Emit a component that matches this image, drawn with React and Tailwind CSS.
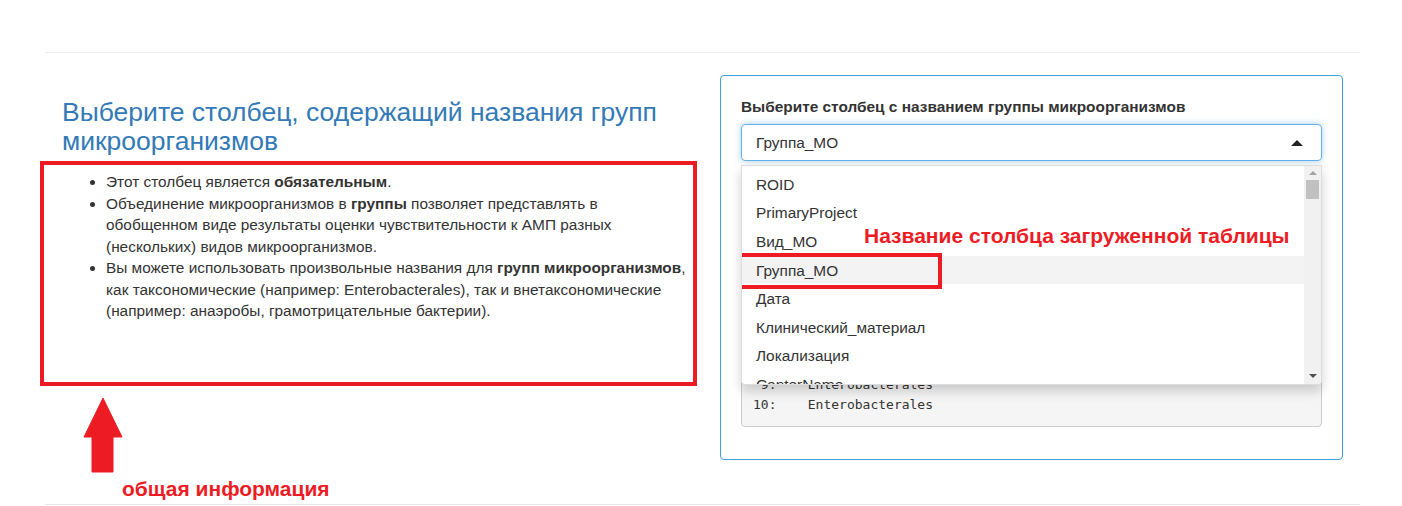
import React from 'react';

const options = [
  'ROID',
  'PrimaryProject',
  'Вид_МО',
  'Группа_МО',
  'Дата',
  'Клинический_материал',
  'Локализация',
  'CenterName',
  'Отделение',
];

const preLines = [
  ' 1:    Enterobacterales',
  ' 2:    Enterobacterales',
  ' 3:    Enterobacterales',
  ' 4:    Enterobacterales',
  ' 5:    Enterobacterales',
  ' 6:    Enterobacterales',
  ' 7:    Enterobacterales',
  ' 8:    Enterobacterales',
  ' 9:    Enterobacterales',
  '10:    Enterobacterales',
];

function UpArrow() {
  return (
    <svg width="40" height="75" viewBox="0 0 40 75" className="block">
      <path d="M20 0 L39 39 L30 39 L30 74 L9 74 L9 39 L1 39 Z" fill="#ed1c24" stroke="#ed1c24" strokeWidth="1" strokeLinejoin="round" />
    </svg>
  );
}

export default function App() {
  return (
    <div className="w-[1402px] h-[506px] bg-white overflow-hidden text-[#333] font-['Liberation_Sans',Arial,sans-serif]">
      <div className="ml-[45px] mr-[42px] mt-[52px] border-t border-[#eee]">
        <div className="flex pl-[17px] pr-[14px] pt-[22px] gap-[22px]">
          {/* left column: description */}
          <div className="w-[636px] flex-none">
            <h3 className="mt-[23px] text-[26.5px] leading-[29px] text-[#337ab7]">
              Выберите столбец, содержащий названия групп микроорганизмов
            </h3>
            <div className="mt-[5px] -ml-[22px] w-[657px] h-[225px] border-4 border-[#ed1c24]">
              <ul className="list-disc pl-[62px] pt-[6px] pr-0 text-[15.4px] leading-[21.5px] text-[#333]">
                <li>Этот столбец является <b>обязательным</b>.</li>
                <li>
                  Объединение микроорганизмов в <b>группы</b> позволяет представлять в обобщенном виде результаты
                  оценки чувствительности к АМП разных (нескольких) видов микроорганизмов.
                </li>
                <li>
                  Вы можете использовать произвольные названия для <b>групп микроорганизмов</b>, как таксономические
                  (например: Enterobacterales), так и внетаксономические (например: анаэробы, грамотрицательные
                  бактерии).
                </li>
              </ul>
            </div>
            <div className="flex items-start mt-[12px] ml-[21px]">
              <UpArrow />
            </div>
            <div className="ml-[60px] mt-[4px] text-[21px] leading-[24px] font-bold text-[#ed1c24]">
              общая информация
            </div>
          </div>

          {/* right column: selector panel */}
          <div className="w-[623px] flex-none h-[385px] border border-[#3d9ee0] rounded-[4px] px-[20px] pt-[20px]">
            <label className="block text-[15.4px] leading-[22px] font-bold text-[#333]">
              Выберите столбец с названием группы микроорганизмов
            </label>
            <div className="relative mt-[6px]">
              <div className="flex items-center justify-between h-[37px] border border-[#66afe9] rounded-[4px] shadow-[0_0_6px_rgba(102,175,233,0.6)] pl-[14px] pr-[18px] text-[15.4px]">
                <span>Группа_МО</span>
                <span className="w-0 h-0 border-l-[6px] border-r-[6px] border-b-[6px] border-l-transparent border-r-transparent border-b-[#222]" />
              </div>

              <div className="absolute left-0 right-0 top-[41px] h-[220px] z-10 bg-white border border-[#ddd] rounded-b-[4px] shadow-[0_6px_12px_rgba(0,0,0,0.18)] overflow-hidden flex">
                <div className="flex-1 pt-[4px]">
                  {options.map((o) => (
                    <div
                      key={o}
                      className={`h-[28.6px] flex items-center pl-[14px] text-[15.4px] text-[#333] ${o === 'Группа_МО' ? 'bg-[#f3f3f3]' : ''}`}
                    >
                      {o}
                    </div>
                  ))}
                </div>
                <div className="w-[17px] flex-none bg-[#f1f1f1] flex flex-col items-center">
                  <span className="mt-[5px] w-0 h-0 border-l-[4px] border-r-[4px] border-b-[4px] border-l-transparent border-r-transparent border-b-[#a3a3a3]" />
                  <span className="mt-[5px] w-[13px] h-[19px] bg-[#c1c1c1]" />
                  <span className="mt-auto mb-[6px] w-0 h-0 border-l-[4px] border-r-[4px] border-t-[4px] border-l-transparent border-r-transparent border-t-[#505050]" />
                </div>

                <div className="absolute left-[-4px] top-[87px] w-[204px] h-[36px] border-4 border-[#ed1c24]" />
                <div className="absolute left-[122px] top-[58px] text-[21px] leading-[24px] font-bold text-[#ed1c24] whitespace-nowrap">
                  Название столбца загруженной таблицы
                </div>
              </div>

              <pre className="mt-[44px] bg-[#f5f5f5] border border-[#ccc] rounded-[4px] pl-[11px] pt-[9px] pb-[11px] font-['DejaVu_Sans_Mono',monospace] text-[13px] leading-[20px] text-[#333] whitespace-pre">
                {preLines.join('\n')}
              </pre>
            </div>
          </div>
        </div>
      </div>
      <div className="ml-[45px] mr-[42px] mt-[3px] border-t border-[#e5e5e5]" />
    </div>
  );
}
